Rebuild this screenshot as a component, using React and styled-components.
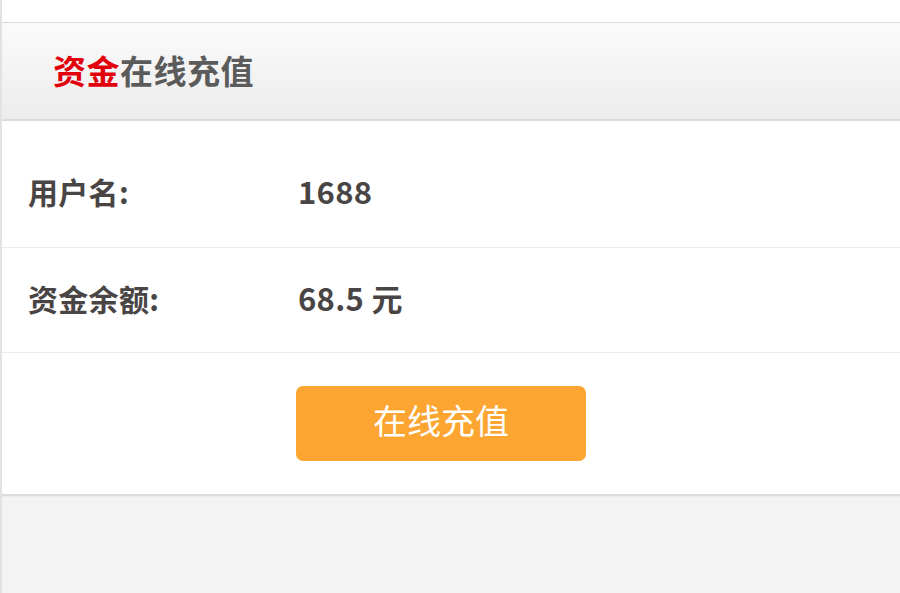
import React from "react";
import styled, { createGlobalStyle } from "styled-components";

const Global = createGlobalStyle`
  html, body { margin: 0; padding: 0; background: #f3f3f3; }
  body { font-family: "Noto Sans CJK SC", "Noto Sans", sans-serif; }
`;

const Page = styled.div`
  min-height: 593px;
  border-left: 2px solid #e2e2e2;
  background: #f3f3f3;
`;

const Panel = styled.section`
  background: #fff;
  padding-top: 22px;
  border-bottom: 2px solid #dcdcdc;
  box-shadow: 0 1px 0 #ececec;
`;

const Header = styled.header`
  box-sizing: border-box;
  height: 99px;
  border-top: 1px solid #dadada;
  border-bottom: 2px solid #dcdcdc;
  background: linear-gradient(#fbfbfb, #ececec);
  display: flex;
  align-items: center;
  padding-left: 51px;
  padding-bottom: 2px;
  font-size: 33px;
  font-weight: 700;
  color: #5b5b5b;
  letter-spacing: 0.5px;
`;

const Red = styled.span`
  color: #e1000b;
`;

const Body = styled.div`
  padding-top: 18px;
`;

const Row = styled.div`
  display: grid;
  grid-template-columns: 270px 1fr;
  align-items: center;
  box-sizing: border-box;
  height: ${(p) => p.$h}px;
  padding: 0 0 5px 26px;
  border-bottom: 1px solid #ececec;
  font-size: 30px;
  font-weight: 700;
  color: #4a4545;
  letter-spacing: 0.3px;
`;

const Value = styled.span`
  font-size: 31px;
  letter-spacing: 0.3px;
`;

const Actions = styled.div`
  display: grid;
  grid-template-columns: 268px auto;
  padding: 33px 0 33px 26px;
`;

const Button = styled.button`
  grid-column: 2;
  justify-self: start;
  box-sizing: border-box;
  width: 290px;
  height: 75px;
  border: none;
  border-radius: 7px;
  background: #fca631;
  color: #fff;
  font-family: "Noto Sans CJK SC", "Noto Sans", sans-serif;
  font-size: 34px;
  font-weight: 400;
  padding: 0 0 8px;
  cursor: pointer;
`;

export default function App() {
  return (
    <>
      <Global />
      <Page>
        <Panel>
          <Header>
            <Red>资金</Red>在线充值
          </Header>
          <Body>
            <Row $h={109}>
              <span>用户名:</span>
              <Value>1688</Value>
            </Row>
            <Row $h={105}>
              <span>资金余额:</span>
              <Value>68.5 元</Value>
            </Row>
          </Body>
          <Actions>
            <Button>在线充值</Button>
          </Actions>
        </Panel>
      </Page>
    </>
  );
}
